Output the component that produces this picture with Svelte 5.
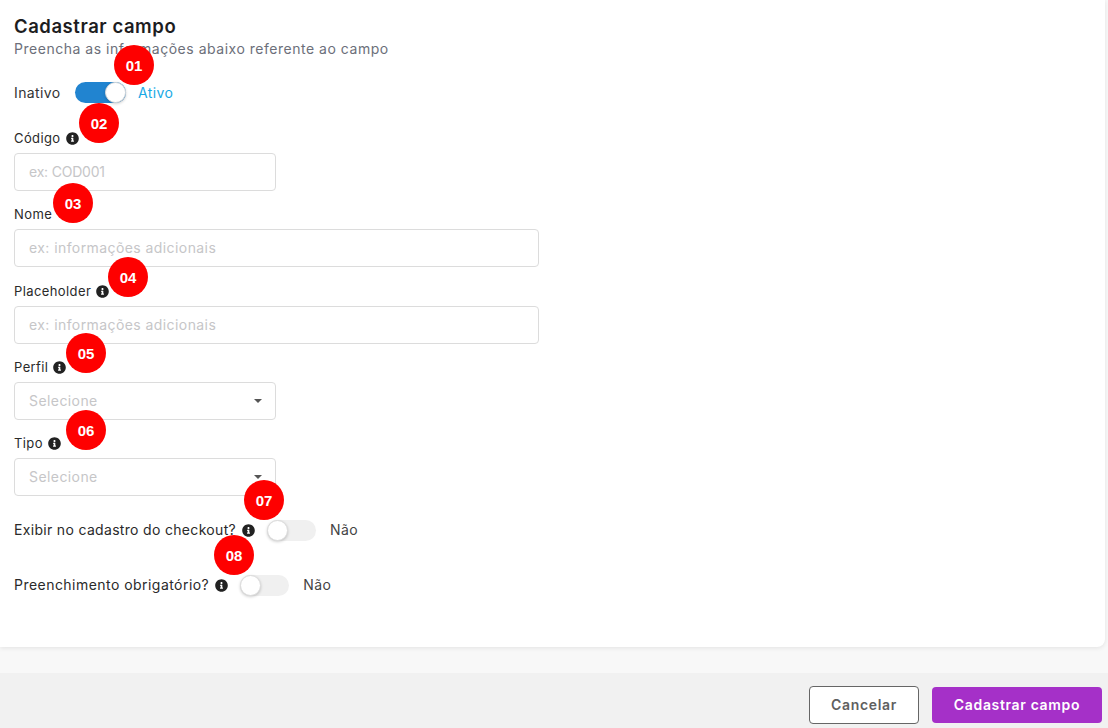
{#snippet info()}
  <svg class="info" viewBox="0 0 512 512" aria-hidden="true"><path d="M256 8C119 8 8 119 8 256s111 248 248 248 248-111 248-248S393 8 256 8zm0 110c23 0 42 19 42 42s-19 42-42 42-42-19-42-42 19-42 42-42zm56 254c0 7-5 12-12 12h-88c-7 0-12-5-12-12v-24c0-7 5-12 12-12h12v-64h-12c-7 0-12-5-12-12v-24c0-7 5-12 12-12h64c7 0 12 5 12 12v100h12c7 0 12 5 12 12v24z"/></svg>
{/snippet}

{#snippet caret()}
  <span class="caret"></span>
{/snippet}

<div class="page">
  <section class="card">
    <h1>Cadastrar campo</h1>
    <p class="sub">Preencha as informações abaixo referente ao campo</p>

    <div class="status">
      <span class="lbl">Inativo</span>
      <span class="sw on"><span class="knob"></span></span>
      <span class="ativo">Ativo</span>
    </div>

    <div class="field f-cod">
      <div class="flabel"><span>Código</span>{@render info()}</div>
      <div class="box short"><span class="ph code">ex: COD001</span></div>
    </div>
    <div class="field f-nome">
      <div class="flabel"><span>Nome</span></div>
      <div class="box long"><span class="ph">ex: informações adicionais</span></div>
    </div>
    <div class="field f-place">
      <div class="flabel"><span>Placeholder</span>{@render info()}</div>
      <div class="box long"><span class="ph">ex: informações adicionais</span></div>
    </div>
    <div class="field f-perfil">
      <div class="flabel"><span>Perfil</span>{@render info()}</div>
      <div class="box short sel"><span class="ph">Selecione</span>{@render caret()}</div>
    </div>
    <div class="field f-tipo">
      <div class="flabel"><span>Tipo</span>{@render info()}</div>
      <div class="box short sel"><span class="ph">Selecione</span>{@render caret()}</div>
    </div>

    <div class="row r1">
      <span class="rl">Exibir no cadastro do checkout?</span>{@render info()}
      <span class="sw"><span class="knob"></span></span>
      <span class="nao">Não</span>
    </div>
    <div class="row r2">
      <span class="rl">Preenchimento obrigatório?</span>{@render info()}
      <span class="sw"><span class="knob"></span></span>
      <span class="nao">Não</span>
    </div>
  </section>

  <footer>
    <button class="cancel">Cancelar</button>
    <button class="submit">Cadastrar campo</button>
  </footer>

  <span class="pin p1">01</span>
  <span class="pin p2">02</span>
  <span class="pin p3">03</span>
  <span class="pin p4">04</span>
  <span class="pin p5">05</span>
  <span class="pin p6">06</span>
  <span class="pin p7">07</span>
  <span class="pin p8">08</span>
</div>

<style>
  :global(body) { margin: 0; background: #f8f8f8; }
  .page {
    position: relative;
    width: 1108px;
    height: 728px;
    overflow: hidden;
    display: flex;
    flex-direction: column;
    font-family: "Inter", "Liberation Sans", sans-serif;
    color: #2a2a2a;
    background: #f8f8f8;
  }
  .card {
    width: 1105px;
    height: 647px;
    flex: none;
    box-sizing: border-box;
    background: #fff;
    border-radius: 0 0 8px 0;
    box-shadow: 0 1px 5px rgba(0,0,0,.09);
    padding: 14px 14px 0;
  }
  h1 { margin: 0 0 1px; font-size: 18.5px; line-height: 24px; font-weight: 600; color: #1d1d1f; letter-spacing: .55px; }
  .sub { margin: 0; font-size: 14px; line-height: 20px; color: #6c6f7a; letter-spacing: .52px; }
  .status { display: flex; align-items: center; height: 22px; margin-top: 22px; font-size: 14px; letter-spacing: .4px; }
  .lbl { width: 61px; color: #333; }
  .sw { display: block; position: relative; width: 49px; height: 21px; border-radius: 11px; background: #f0f0f0; flex: none; }
  .sw.on { width: 51px; background: #2184d0; }
  .knob {
    position: absolute; top: 0; left: 0; width: 21px; height: 21px; border-radius: 50%;
    box-sizing: border-box; background: #fff; border: 1px solid #dcdcdc;
    box-shadow: 0 1px 3px rgba(0,0,0,.2);
  }
  .on .knob { left: auto; right: 0; }
  .ativo { margin-left: 12px; color: #19a9e5; font-size: 14px; }
  .field { display: flex; flex-direction: column; }
  .flabel { display: flex; align-items: center; gap: 5px; height: 18px; font-size: 13px; color: #2a2a2a; letter-spacing: .4px; }
  .box {
    box-sizing: border-box; height: 38px; margin-top: 6px; border: 1px solid #dcdcdc; border-radius: 4px;
    background: #fff; display: flex; align-items: center; padding: 0 14px 2px; font-size: 14px; letter-spacing: .42px;
  }
  .short { width: 262px; }
  .long { width: 525px; }
  .sel { justify-content: space-between; padding-right: 12px; }
  .ph { color: #c6c6c8; }
  .code { letter-spacing: -.2px; }
  .caret { width: 0; height: 0; margin-top: 2px; margin-right: 1px; border-left: 4.5px solid transparent; border-right: 4.5px solid transparent; border-top: 4.5px solid #555; }
  .info { width: 13px; height: 13px; fill: #222; flex: none; }
  .f-cod { margin-top: 26px; }
  .f-nome { margin-top: 14px; }
  .f-place { margin-top: 15px; }
  .f-perfil { margin-top: 14px; }
  .f-tipo { margin-top: 14px; }
  .row { display: flex; align-items: center; height: 21px; font-size: 14px; color: #2a2a2a; }
  .row .info { margin-left: 6px; margin-right: 12px; }
  .rl, .nao { margin-bottom: 2px; }
  .nao { margin-left: 14px; color: #444; letter-spacing: .4px; }
  .r1 { margin-top: 24px; }
  .r1 .rl { letter-spacing: .32px; }
  .r2 { margin-top: 34px; }
  .r2 .rl { letter-spacing: .46px; }
  footer {
    margin-top: 26px;
    flex: 1;
    background: #f1f1f1;
    display: flex;
    justify-content: flex-end;
    align-items: flex-start;
    gap: 13px;
    padding: 13px 6px 0 0;
  }
  button {
    box-sizing: border-box; height: 38px; padding: 0 0 2px; border-radius: 4px; font: 600 14px "Inter", "Liberation Sans", sans-serif; cursor: pointer; letter-spacing: .65px;
  }
  .cancel { width: 110px; background: #fff; border: 1px solid #666; color: #5f5f5f; }
  .submit { width: 170px; height: 36px; margin-top: 1px; background: #a530c8; border: 0; color: #fff; }
  .pin {
    position: absolute; width: 40px; height: 40px; border-radius: 50%; background: #fe0000; color: #fff;
    display: flex; align-items: center; justify-content: center;
    font: 700 15px "Liberation Sans", sans-serif;
  }
  .p1 { left: 114px; top: 45px; }
  .p2 { left: 79px; top: 103px; }
  .p3 { left: 53px; top: 183px; }
  .p4 { left: 108px; top: 257px; }
  .p5 { left: 66px; top: 333px; }
  .p6 { left: 66px; top: 410px; }
  .p7 { left: 244px; top: 480px; }
  .p8 { left: 214px; top: 535px; }
</style>
